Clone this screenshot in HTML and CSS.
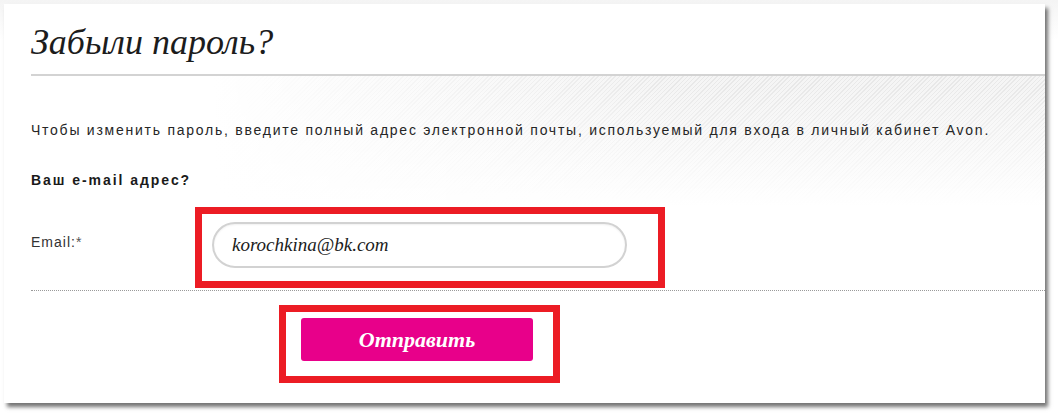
FILE: index.html
```html
<!DOCTYPE html>
<html lang="ru">
<head>
  <meta charset="UTF-8">
  <title>Забыли пароль?</title>
  <meta name="viewport" content="width=device-width, initial-scale=1.0">
  <link rel="stylesheet" href="styles.css">
</head>
<body>
  <div class="card">
    <div class="card-head">
      <h1>Забыли пароль?</h1>
    </div>

    <div class="card-body">
      <p class="intro">Чтобы изменить пароль, введите полный адрес электронной почты, используемый для входа в личный кабинет Avon.</p>
      <h2 class="question">Ваш e-mail адрес?</h2>

      <div class="form-row">
        <label class="label" for="email">Email:<span class="req">*</span></label>
        <div class="mark mark-input">
          <input class="field" type="text" id="email" value="korochkina@bk.com">
        </div>
      </div>

      <div class="actions">
        <div class="mark mark-button">
          <button class="submit" type="button">Отправить</button>
        </div>
      </div>
    </div>
  </div>
</body>
</html>
```

FILE: styles.css
```css
:root {
  --mark: #ec1c24;
  --pink: #e8008a;
  --text: #222222;
  --line: #d3d3d3;
}

* {
  box-sizing: border-box;
  margin: 0;
  padding: 0;
}

body {
  background: linear-gradient(#f4f4f4, #ffffff 40px);
  font-family: 'Liberation Sans', Arial, sans-serif;
  color: var(--text);
  padding: 4px 0 0 4px;
  min-height: 415px;
}

.card {
  width: 1041px;
  height: 399px;
  background: #fff;
  box-shadow: 3px 4px 4px rgba(0, 0, 0, 0.55);
}

.card-head h1 {
  margin-left: 27px;
  padding: 18px 0 12px;
  line-height: 40px;
  font-family: 'Liberation Serif', 'Times New Roman', serif;
  font-style: italic;
  font-weight: normal;
  font-size: 36px;
  color: #1c1c1c;
  border-bottom: 2px solid var(--line);
}

.card-body {
  padding-left: 27px;
  padding-top: 45px;
  background-image:
    linear-gradient(to right, #fff 20%, rgba(255, 255, 255, 0) 65%),
    linear-gradient(to bottom, rgba(255, 255, 255, 0) 10px, #fff 130px),
    repeating-linear-gradient(135deg, #e8e8e8 0 1px, #f5f5f5 1px 3px);
  background-repeat: no-repeat;
  background-size: 100% 140px;
}

.intro {
  font-size: 14px;
  line-height: 18px;
  letter-spacing: 1.75px;
  color: #262626;
}

.question {
  margin-top: 32px;
  font-size: 14px;
  line-height: 18px;
  font-weight: bold;
  letter-spacing: 1.95px;
  color: #1a1a1a;
}

.form-row {
  display: flex;
  margin-top: 18px;
  padding-bottom: 2px;
  border-bottom: 1px dotted #9a9a9a;
}

.label {
  width: 164px;
  padding-top: 26px;
  font-size: 14px;
  line-height: 18px;
  letter-spacing: 1px;
  color: #333;
}

.req {
  color: #555;
}

.mark {
  border: 7px solid var(--mark);
  background: #fff;
}

.mark-input {
  width: 470px;
  height: 81px;
  padding: 8px 31px 13px 10px;
}

.field {
  width: 415px;
  height: 46px;
  border: 2px solid #d2d2d2;
  border-radius: 23px;
  padding: 0 18px;
  font-family: 'Liberation Serif', 'Times New Roman', serif;
  font-style: italic;
  font-size: 19px;
  color: #1c1c1c;
  outline: none;
  box-shadow: inset 0 1px 2px rgba(0, 0, 0, 0.06);
}

.actions {
  margin-top: 14px;
  padding-left: 248px;
}

.mark-button {
  width: 281px;
  height: 78px;
  padding: 6px 20px 15px 15px;
}

.submit {
  width: 232px;
  height: 43px;
  border: none;
  border-radius: 3px;
  background: var(--pink);
  color: #fff;
  font-family: 'Liberation Serif', 'Times New Roman', serif;
  font-style: italic;
  font-weight: bold;
  font-size: 22px;
  cursor: pointer;
}
```
